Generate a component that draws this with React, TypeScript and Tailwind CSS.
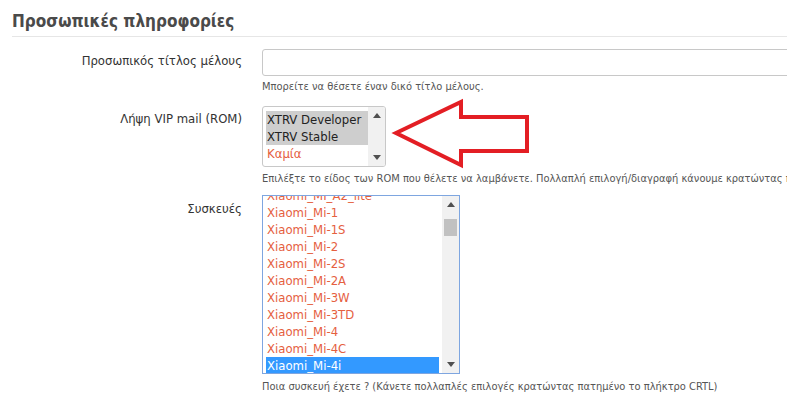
import React from "react";

const font = {
  fontFamily: "'DejaVu Sans Condensed', 'DejaVu Sans', sans-serif",
  fontStretch: "semi-condensed",
};

const romOptions = [
  { name: "XTRV Developer", selected: true, red: false },
  { name: "XTRV Stable", selected: true, red: false },
  { name: "Καμία", selected: false, red: true },
];

const devices = [
  "Xiaomi_MI_A2_lite",
  "Xiaomi_Mi-1",
  "Xiaomi_Mi-1S",
  "Xiaomi_Mi-2",
  "Xiaomi_Mi-2S",
  "Xiaomi_Mi-2A",
  "Xiaomi_Mi-3W",
  "Xiaomi_Mi-3TD",
  "Xiaomi_Mi-4",
  "Xiaomi_Mi-4C",
  "Xiaomi_Mi-4i",
];

const Up = () => (
  <svg width="8" height="5" viewBox="0 0 8 5">
    <polygon points="0,5 4,0 8,5" fill="#505050" />
  </svg>
);
const Down = () => (
  <svg width="8" height="5" viewBox="0 0 8 5">
    <polygon points="0,0 8,0 4,5" fill="#505050" />
  </svg>
);

const Arrow = () => (
  <svg
    className="absolute left-[390px] top-[97px]"
    width="145"
    height="75"
    viewBox="390 97 145 75"
  >
    <polygon
      points="396,133 461,102 461,117 527,117 527,151 461,151 461,165"
      fill="none"
      stroke="#e31e24"
      strokeWidth="4"
      strokeLinejoin="miter"
    />
  </svg>
);

const Row = ({ label, children }: { label: string; children: React.ReactNode }) => (
  <div className="flex">
    <div className="w-[242px] shrink-0 text-right text-[13px] text-[#333] pt-[1px]">{label}</div>
    <div className="ml-[20px] flex-1 min-w-0">{children}</div>
  </div>
);

export default function App() {
  return (
    <div className="relative w-[787px] h-[397px] overflow-hidden bg-white" style={font}>
      <div className="pl-[12px] pt-[9px]">
        <h2 className="text-[17px] font-bold text-[#4a4a4a] leading-[24px] pb-[3px] border-b border-[#e6e6e6]">
          Προσωπικές πληροφορίες
        </h2>
      </div>

      <div className="mt-[13px] flex flex-col">
        <Row label="Προσωπικός τίτλος μέλους">
          <div className="h-[27px] -mt-[1px] mr-[-10px] border border-[#c8c8c8] rounded-[3px] bg-white" />
          <div className="text-[11px] text-[#555] mt-[4px] leading-[14px] whitespace-nowrap">
            Μπορείτε να θέσετε έναν δικό τίτλο μέλους.
          </div>
        </Row>

        <div className="mt-[14px]">
          <Row label="Λήψη VIP mail (ROM)">
            <div className="w-[124px] h-[61px] -mt-[2px] border border-[#c8c8c8] rounded-[3px] flex overflow-hidden">
              <div className="flex-1 pl-[3px] pt-[4px]">
                {romOptions.map((o) => (
                  <div
                    key={o.name}
                    className={`h-[17px] leading-[17px] text-[13px] pl-[1px] whitespace-nowrap ${
                      o.selected ? "bg-[#cecece] text-[#222]" : ""
                    } ${o.red ? "text-[#e5603f]" : ""}`}
                  >
                    {o.name}
                  </div>
                ))}
              </div>
              <div className="w-[17px] bg-[#f1f1f1] flex flex-col items-center justify-between py-[6px]">
                <Up />
                <Down />
              </div>
            </div>
            <div className="text-[11px] text-[#555] mt-[5px] leading-[14px] whitespace-nowrap">
              Επιλέξτε το είδος των ROM που θέλετε να λαμβάνετε. Πολλαπλή επιλογή/διαγραφή κάνουμε κρατώντας πατημένο το πλήκτρο CRTL
            </div>
          </Row>
        </div>

        <div className="mt-[12px]">
          <Row label="Συσκευές">
            <div className="w-[198px] h-[179px] -mt-[3px] border border-[#7ea6e0] flex overflow-hidden">
              <div className="flex-1 pl-[3px] pr-[3px] overflow-hidden">
                <div className="-mt-[9px]">
                  {devices.map((d, i) => (
                    <div
                      key={d}
                      className={`h-[17px] leading-[17px] text-[13px] pl-[1px] whitespace-nowrap ${
                        i === devices.length - 1 ? "bg-[#3399ff] text-white" : "text-[#e5603f]"
                      }`}
                    >
                      {d}
                    </div>
                  ))}
                </div>
              </div>
              <div className="w-[17px] bg-[#f1f1f1] flex flex-col items-center pt-[6px] pb-[6px]">
                <Up />
                <div className="mt-[12px] w-[13px] h-[17px] bg-[#c1c1c1]" />
                <div className="flex-1" />
                <Down />
              </div>
            </div>
            <div className="text-[11px] text-[#555] mt-[6px] leading-[14px] whitespace-nowrap">
              Ποια συσκευή έχετε ? (Κάνετε πολλαπλές επιλογές κρατώντας πατημένο το πλήκτρο CRTL)
            </div>
          </Row>
        </div>
      </div>

      <Arrow />
    </div>
  );
}
